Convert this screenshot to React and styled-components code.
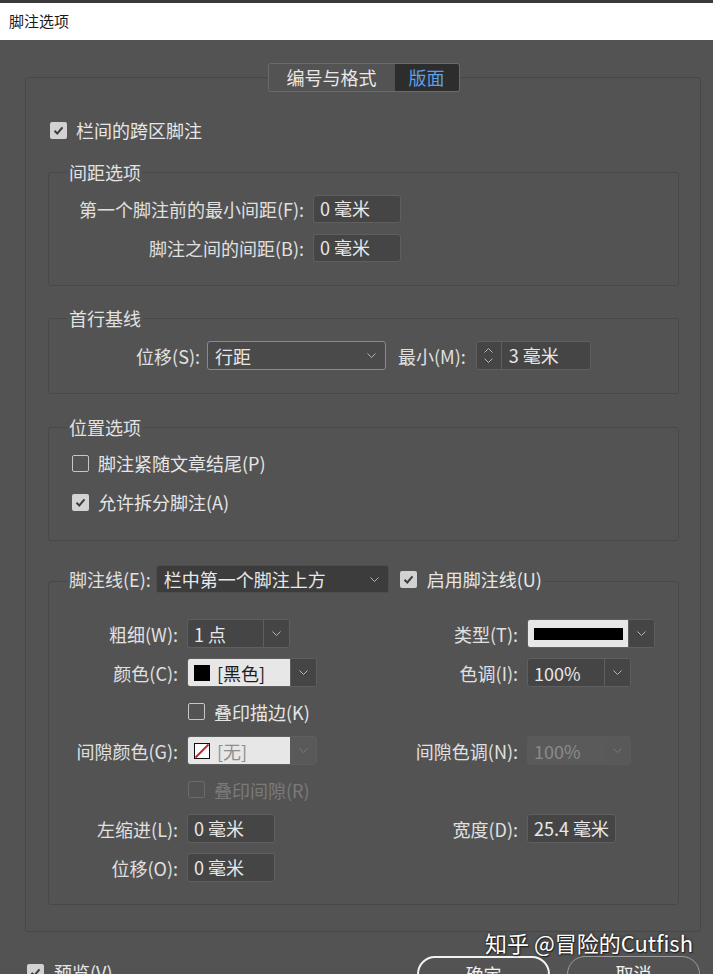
import React from "react";
import styled, { createGlobalStyle } from "styled-components";

const GlobalStyle = createGlobalStyle`
  * { box-sizing: border-box; }
  html, body { margin: 0; padding: 0; background: #535353; }
  body {
    font-family: "Noto Sans CJK SC", "Microsoft YaHei", sans-serif;
    color: #e2e2e2;
    overflow: hidden;
  }
`;

const Page = styled.div`
  position: relative;
  height: 974px;
  overflow: hidden;
  background: #535353;
`;

const TopStrip = styled.div`
  height: 3px;
  background: #3a3a3a;
`;

const TitleBar = styled.div`
  height: 37px;
  padding-left: 9px;
  background: #ffffff;
  color: #1a1a1a;
  font-size: 15px;
  line-height: 36px;
`;

const Panel = styled.fieldset`
  margin: 23px 12px 0 25px;
  padding: 27px 21px 26px 22px;
  min-width: 0;
  border: 1px solid #474747;
  border-radius: 3px;
  display: flex;
  flex-direction: column;
`;

const TabBar = styled.legend`
  margin: 0 auto;
  padding: 0;
  display: flex;
  border: 1px solid #6b6b6b;
  border-radius: 3px;
  overflow: hidden;
`;

const Tab = styled.div`
  width: ${p => p.$w}px;
  height: 27px;
  line-height: 26px;
  text-align: center;
  font-size: 18px;
  color: ${p => (p.$active ? "#5b9fe6" : "#e8e8e8")};
  background: ${p => (p.$active ? "#2d2d2d" : "#535353")};
`;

const Group = styled.fieldset`
  margin: ${p => p.$mt}px 0 0;
  padding: ${p => p.$pt}px 0 ${p => p.$pb}px;
  min-width: 0;
  border: 1px solid #484848;
  border-radius: 3px;
`;

const GroupTitle = styled.legend`
  margin-left: 18px;
  padding: 0 2px;
  font-size: 18px;
  line-height: 22px;
  color: #e2e2e2;
`;

const LegendRow = styled.legend`
  margin-left: 18px;
  padding: 0 2px 4px;
  display: flex;
  align-items: center;
`;

const Label = styled.span`
  font-size: 18px;
  line-height: 22px;
  white-space: nowrap;
  text-align: right;
  color: ${p => (p.$dim ? "#7c7c7c" : "#e0e0e0")};
  margin-left: ${p => p.$ml || 0}px;
  ${p => p.$w && `width: ${p.$w}px; flex: none;`}
`;

const CheckRow = styled.div`
  display: flex;
  align-items: center;
  gap: ${p => p.$gap ?? 9}px;
  height: 22px;
  margin-left: ${p => p.$ml || 0}px;
  margin-top: ${p => p.$mt || 0}px;
  font-size: 18px;
  white-space: nowrap;
  color: ${p => (p.$dim ? "#7a7a7a" : "#e6e6e6")};
`;

const Box = styled.span`
  width: 17px;
  height: 17px;
  flex: none;
  display: flex;
  align-items: center;
  justify-content: center;
  border-radius: 2px;
  background: ${p => (p.$checked ? "#d2d2d2" : "transparent")};
  border: ${p => (p.$checked ? "none" : `1px solid ${p.$dim ? "#6a6a6a" : "#c6c6c6"}`)};
`;

const SpacingRow = styled.div`
  display: grid;
  grid-template-columns: 255px 88px;
  column-gap: 9px;
  align-items: center;
  height: 28px;
  margin-top: ${p => p.$mt || 0}px;
`;

const TextBox = styled.div`
  width: ${p => p.$w}px;
  height: ${p => p.$h || 28}px;
  padding-left: 6px;
  background: #454545;
  border: 1px solid #5f5f5f;
  border-radius: 3px;
  font-size: 18px;
  line-height: ${p => (p.$h || 28) - 3}px;
  color: #e8e8e8;
  white-space: nowrap;
`;

const BaselineRow = styled.div`
  display: flex;
  align-items: center;
  height: 29px;
`;

const Select = styled.div`
  width: ${p => p.$w}px;
  height: ${p => p.$h || 29}px;
  margin-left: ${p => p.$ml || 0}px;
  flex: none;
  display: flex;
  align-items: center;
  justify-content: space-between;
  padding: 0 9px 0 7px;
  background: ${p => (p.$dark ? "#3c3c3c" : "#4a4a4a")};
  border: 1px solid ${p => (p.$focus ? "#6f8fb7" : "#4d4d4d")};
  border-radius: 3px;
  font-size: 18px;
  color: #e8e8e8;
  white-space: nowrap;
`;

const Spinner = styled.div`
  display: flex;
  width: 115px;
  height: 29px;
  margin-left: 10px;
  background: #454545;
  border: 1px solid #5f5f5f;
  border-radius: 3px;
  overflow: hidden;
`;

const SpinArrows = styled.div`
  width: 25px;
  flex: none;
  display: flex;
  flex-direction: column;
  align-items: center;
  justify-content: space-between;
  padding: 6px 0;
  border-right: 1px solid #5f5f5f;
`;

const SpinValue = styled.div`
  padding-left: 7px;
  font-size: 18px;
  line-height: 26px;
  color: #e8e8e8;
  white-space: nowrap;
`;

const CheckList = styled.div`
  padding-left: 23px;
`;

const FormGrid = styled.div`
  display: grid;
  grid-template-columns: 129px 192px 130px 1fr;
  grid-auto-rows: 29px;
  row-gap: 10px;
  column-gap: 9px;
  align-items: center;
`;

const Wide = styled.div`
  grid-column: 2 / span 3;
  padding-left: 1px;
`;

const Combo = styled.div`
  display: flex;
  width: ${p => p.$w}px;
  height: 29px;
  background: ${p => (p.$disabled ? "#5a5a5a" : "#454545")};
  border: 1px solid ${p => (p.$disabled ? "#5a5a5a" : "#5f5f5f")};
  border-radius: 3px;
  overflow: hidden;
`;

const ComboField = styled.div`
  flex: 1;
  display: flex;
  align-items: center;
  gap: 7px;
  padding: 0 ${p => (p.$bar ? 5 : 0)}px 0 6px;
  background: ${p => (p.$light ? "#e7e7e7" : "transparent")};
  font-size: 18px;
  color: ${p => p.$color || "#e8e8e8"};
  white-space: nowrap;
`;

const DropBtn = styled.div`
  width: 26px;
  flex: none;
  display: flex;
  align-items: center;
  justify-content: center;
  background: ${p => (p.$disabled ? "#595959" : "#454545")};
  border-left: 1px solid ${p => (p.$disabled ? "#5a5a5a" : "#5f5f5f")};
`;

const LineBar = styled.span`
  flex: 1;
  height: 12px;
  background: #000;
`;

const Swatch = styled.span`
  width: 16px;
  height: 16px;
  flex: none;
  background: #000;
`;

const Footer = styled.div`
  display: flex;
  align-items: flex-start;
  margin-top: 24px;
  padding: 0 13px 0 27px;
`;

const Buttons = styled.div`
  display: flex;
  gap: 17px;
  margin-left: auto;
`;

const Button = styled.div`
  width: 133px;
  height: 36px;
  border-radius: 18px;
  border: ${p => (p.$primary ? "2px solid #f2f2f2" : "1px solid #9c9c9c")};
  text-align: center;
  font-size: 18px;
  line-height: 33px;
  color: #f0f0f0;
`;

const Watermark = styled.div`
  position: absolute;
  top: 926px;
  right: 20px;
  font-size: 22px;
  color: #ffffff;
  white-space: nowrap;
  text-shadow: 0 0 3px rgba(0, 0, 0, 0.75), 1px 1px 1px rgba(0, 0, 0, 0.5);
`;

function Chevron({ up, color = "#b4b4b4" }) {
  return (
    <svg width="9" height="5" viewBox="0 0 9 5">
      <polyline
        points={up ? "0.5,4.5 4.5,0.5 8.5,4.5" : "0.5,0.5 4.5,4.5 8.5,0.5"}
        fill="none"
        stroke={color}
        strokeWidth="1"
      />
    </svg>
  );
}

function Check({ checked, dim, children, ...rest }) {
  return (
    <CheckRow $dim={dim} {...rest}>
      <Box $checked={checked} $dim={dim}>
        {checked && (
          <svg width="13" height="13" viewBox="0 0 13 13">
            <path d="M2.5 6.8 L5.3 9.5 L10.5 3.3" fill="none" stroke="#3e3e3e" strokeWidth="2" />
          </svg>
        )}
      </Box>
      {children}
    </CheckRow>
  );
}

function NoneSwatch() {
  return (
    <svg width="16" height="16" viewBox="0 0 16 16">
      <rect x="0.5" y="0.5" width="15" height="15" fill="#fff" stroke="#111" />
      <line x1="1.5" y1="14.5" x2="14.5" y2="1.5" stroke="#c3262c" strokeWidth="2" />
    </svg>
  );
}

export default function App() {
  return (
    <Page>
      <GlobalStyle />
      <TopStrip />
      <TitleBar>脚注选项</TitleBar>

      <Panel>
        <TabBar>
          <Tab $w={126}>编号与格式</Tab>
          <Tab $w={64} $active>版面</Tab>
        </TabBar>

        <Check checked $ml={2}>栏间的跨区脚注</Check>

        <Group $mt={20} $pt={12} $pb={23}>
          <GroupTitle>间距选项</GroupTitle>
          <SpacingRow>
            <Label>第一个脚注前的最小间距(F):</Label>
            <TextBox $w={88}>0 毫米</TextBox>
          </SpacingRow>
          <SpacingRow $mt={11}>
            <Label>脚注之间的间距(B):</Label>
            <TextBox $w={88}>0 毫米</TextBox>
          </SpacingRow>
        </Group>

        <Group $mt={21} $pt={12} $pb={23}>
          <GroupTitle>首行基线</GroupTitle>
          <BaselineRow>
            <Label $w={151}>位移(S):</Label>
            <Select $w={179} $ml={7} $focus>
              <span>行距</span>
              <Chevron />
            </Select>
            <Label $ml={12}>最小(M):</Label>
            <Spinner>
              <SpinArrows>
                <Chevron up />
                <Chevron />
              </SpinArrows>
              <SpinValue>3 毫米</SpinValue>
            </Spinner>
          </BaselineRow>
        </Group>

        <Group $mt={22} $pt={14} $pb={27}>
          <GroupTitle>位置选项</GroupTitle>
          <CheckList>
            <Check>脚注紧随文章结尾(P)</Check>
            <Check checked $mt={17}>允许拆分脚注(A)</Check>
          </CheckList>
        </Group>

        <Group $mt={24} $pt={22} $pb={22}>
          <LegendRow>
            <Label>脚注线(E):</Label>
            <Select $w={233} $h={28} $ml={5} $dark>
              <span>栏中第一个脚注上方</span>
              <Chevron />
            </Select>
            <Check checked $ml={11} $gap={10}>启用脚注线(U)</Check>
          </LegendRow>

          <FormGrid>
            <Label>粗细(W):</Label>
            <Combo $w={103}>
              <ComboField>1 点</ComboField>
              <DropBtn><Chevron /></DropBtn>
            </Combo>
            <Label>类型(T):</Label>
            <Combo $w={128}>
              <ComboField $light $bar><LineBar /></ComboField>
              <DropBtn><Chevron /></DropBtn>
            </Combo>

            <Label>颜色(C):</Label>
            <Combo $w={130}>
              <ComboField $light $color="#1e1e1e"><Swatch />[黑色]</ComboField>
              <DropBtn><Chevron /></DropBtn>
            </Combo>
            <Label>色调(I):</Label>
            <Combo $w={104}>
              <ComboField>100%</ComboField>
              <DropBtn><Chevron /></DropBtn>
            </Combo>

            <span />
            <Wide>
              <Check>叠印描边(K)</Check>
            </Wide>

            <Label>间隙颜色(G):</Label>
            <Combo $w={130}>
              <ComboField $light $color="#8e8e8e"><NoneSwatch />[无]</ComboField>
              <DropBtn $disabled><Chevron color="#7a7a7a" /></DropBtn>
            </Combo>
            <Label>间隙色调(N):</Label>
            <Combo $w={104} $disabled>
              <ComboField $color="#8a8a8a">100%</ComboField>
              <DropBtn $disabled><Chevron color="#7a7a7a" /></DropBtn>
            </Combo>

            <span />
            <Wide>
              <Check dim>叠印间隙(R)</Check>
            </Wide>

            <Label>左缩进(L):</Label>
            <TextBox $w={88} $h={29}>0 毫米</TextBox>
            <Label>宽度(D):</Label>
            <TextBox $w={89} $h={29}>25.4 毫米</TextBox>

            <Label>位移(O):</Label>
            <TextBox $w={88} $h={29}>0 毫米</TextBox>
          </FormGrid>
        </Group>
      </Panel>

      <Footer>
        <Check checked $mt={5} $gap={10}>预览(V)</Check>
        <Buttons>
          <Button $primary>确定</Button>
          <Button>取消</Button>
        </Buttons>
      </Footer>

      <Watermark>知乎 @冒险的Cutfish</Watermark>
    </Page>
  );
}
